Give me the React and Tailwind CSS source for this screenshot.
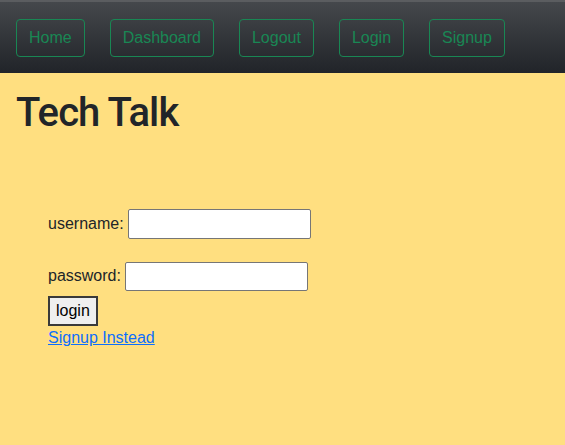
import React from 'react';

const NAV_LINKS = ['Home', 'Dashboard', 'Logout', 'Login', 'Signup'];

export default function App() {
  return (
    <div className="min-h-[445px] bg-[#ffdf80] text-[#212529]" style={{ fontFamily: '"Liberation Sans", Arial, sans-serif' }}>
      {/* Navbar */}
      <nav className="h-[73px] border-t-2 border-[#5b5d60] bg-gradient-to-b from-[#45484c] to-[#212429] flex items-center gap-[25px] px-4">
        {NAV_LINKS.map(label => (
          <button
            key={label}
            className="h-[38px] px-3 rounded border border-[#198754] text-[#198754] text-base leading-6 bg-transparent"
          >
            {label}
          </button>
        ))}
      </nav>

      <main className="px-4">
        <h1 className="mt-[16px] text-[40px] leading-[48px] font-medium tracking-[-0.9px] font-['Roboto',sans-serif]">Tech Talk</h1>

        <form className="mt-[72px] ml-8 text-base leading-6">
          <div className="flex items-center h-[30px]">
            <label className="mr-1">username:</label>
            <input className="w-[183px] h-[30px] bg-white border border-[#767676] rounded-[2px]" />
          </div>
          <div className="flex items-center h-[30px] mt-[22px]">
            <label className="mr-1">password:</label>
            <input type="password" className="w-[183px] h-[29px] bg-white border border-[#767676] rounded-[2px]" />
          </div>
          <button type="button" className="mt-[5px] h-[30px] px-[6px] bg-[#efefef] border-2 border-[#3a3a3a] text-black block">
            login
          </button>
          <a href="#" className="block w-fit text-[#0d6efd] underline leading-6">Signup Instead</a>
        </form>
      </main>
    </div>
  );
}
